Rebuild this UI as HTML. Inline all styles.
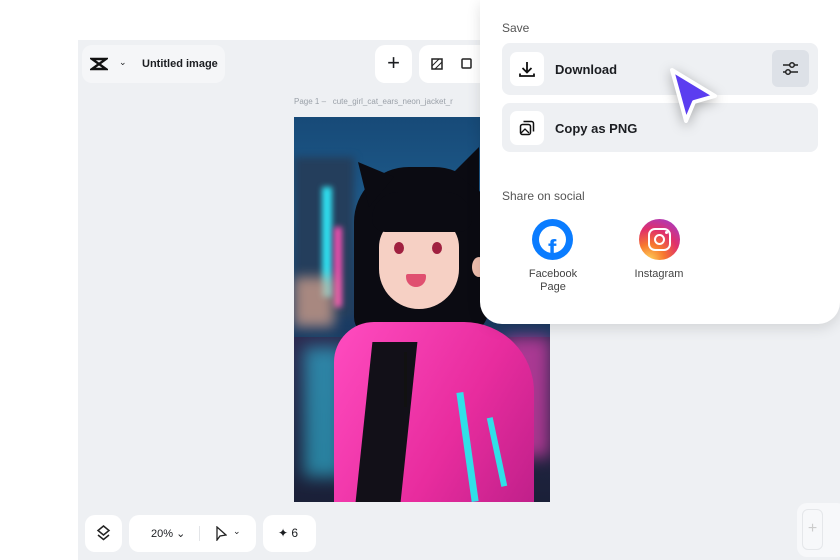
<!DOCTYPE html>
<html><head><style>
*{margin:0;padding:0;box-sizing:border-box}
body{width:840px;height:560px;overflow:hidden;background:#fff;font-family:"Liberation Sans",sans-serif;position:relative;color:#1b1d21}
.canvas{position:absolute;left:78px;top:40px;width:762px;height:520px;background:#eef0f3}
.card{position:absolute;background:#fff;border-radius:10px}
.img{position:absolute;left:294px;top:117px;width:256px;height:385px;overflow:hidden;
background:linear-gradient(180deg,#174a78 0%,#1e5c8c 25%,#1a3d66 50%,#162640 100%)}
.img div{position:absolute}
.pop{position:absolute;left:480px;top:0;width:360px;height:324px;background:#fff;border-radius:0 0 22px 22px;box-shadow:0 4px 14px rgba(0,0,0,.12)}
.row{position:absolute;left:22px;width:316px;background:#eef0f3;border-radius:8px}
.ib{position:absolute;left:8px;top:8px;width:34px;height:34px;background:#fff;border-radius:7px}
.lbl{position:absolute;left:53px;font-size:13px;font-weight:bold;color:#1b1d21}
.sm{font-size:11px;color:#444;text-align:center;position:absolute;line-height:13px}
</style></head><body>
<div class="canvas"></div>
<div class="card" style="left:82px;top:45px;width:143px;height:38px;background:#f5f6f8">
 <svg style="position:absolute;left:8px;top:11px" width="18" height="16" viewBox="0 0 18 16"><path d="M2 3h14l-7 5 7 5H2l7-5z" fill="none" stroke="#111" stroke-width="2.4"/></svg>
 <span style="position:absolute;left:37px;top:12px;font-size:9px">⌄</span>
 <span style="position:absolute;left:60px;top:13px;font-size:11px;font-weight:bold">Untitled image</span>
</div>
<div class="card" style="left:375px;top:45px;width:37px;height:38px;font-size:22px;text-align:center;line-height:36px">+</div>
<div class="card" style="left:419px;top:45px;width:70px;height:38px">
 <svg style="position:absolute;left:12px;top:13px" width="12" height="12"><rect x="1" y="1" width="10" height="10" fill="none" stroke="#222" stroke-width="1.5"/><path d="M1 8L8 1M4 11L11 4" stroke="#222"/></svg>
 <svg style="position:absolute;left:41px;top:12px" width="13" height="13"><rect x="2" y="2" width="9" height="9" fill="none" stroke="#222" stroke-width="1.5" rx="1"/></svg>
</div>
<div style="position:absolute;left:294px;top:97px;font-size:8px;color:#9aa0a8;white-space:nowrap">Page 1 –&nbsp;&nbsp; cute_girl_cat_ears_neon_jacket_r</div>
<div class="img">
 <div style="left:0;top:40px;width:60px;height:160px;background:#243e5c;filter:blur(4px)"></div>
 <div style="left:28px;top:70px;width:10px;height:110px;background:#30e0f0;filter:blur(3px)"></div>
 <div style="left:40px;top:110px;width:8px;height:80px;background:#f050b0;filter:blur(3px)"></div>
 <div style="left:0;top:160px;width:40px;height:50px;background:#e0a890;filter:blur(6px);opacity:.7"></div>
 <div style="left:0;top:220px;width:256px;height:165px;background:linear-gradient(180deg,#2c2a50,#1a2038)"></div>
 <div style="left:10px;top:230px;width:40px;height:130px;background:#30c0e0;filter:blur(8px);opacity:.6"></div>
 <div style="left:210px;top:220px;width:46px;height:120px;background:#e040b0;filter:blur(8px);opacity:.7"></div>
 <div style="left:60px;top:50px;width:135px;height:170px;background:#0b0b12;border-radius:55px 55px 30px 20px"></div>
 <svg style="position:absolute;left:0;top:0" width="256" height="120"><path d="M64 45L100 60 75 90z M185 30L160 55 185 75z" fill="#0b0b12"/></svg>
 <div style="left:85px;top:100px;width:80px;height:92px;background:#f6d0c4;border-radius:30px 30px 40px 40px"></div>
 <div style="left:78px;top:75px;width:100px;height:40px;background:#0b0b12;border-radius:40px 40px 20px 20px"></div>
 <div style="left:100px;top:125px;width:10px;height:12px;background:#a02040;border-radius:50%"></div>
 <div style="left:138px;top:125px;width:10px;height:12px;background:#a02040;border-radius:50%"></div>
 <div style="left:112px;top:157px;width:20px;height:13px;background:#e05070;border-radius:2px 2px 10px 10px"></div>
 <div style="left:178px;top:140px;width:14px;height:20px;background:#f0c0b0;border-radius:50%"></div>
 <div style="left:40px;top:205px;width:200px;height:180px;background:linear-gradient(120deg,#ff4cc0,#e82c9e 60%,#c0208a);border-radius:40px 70px 0 0"></div>
 <div style="left:70px;top:225px;width:45px;height:160px;background:#121018;transform:skewX(-6deg)"></div>
 <div style="left:110px;top:235px;width:3px;height:55px;background:#111"></div>
 <div style="left:170px;top:275px;width:7px;height:110px;background:#30e0e8;transform:rotate(-8deg)"></div>
 <div style="left:200px;top:300px;width:6px;height:70px;background:#30e0e8;transform:rotate(-12deg)"></div>
</div>
<div class="pop">
 <div style="position:absolute;left:22px;top:21px;font-size:12px;color:#555">Save</div>
 <div class="row" style="top:43px;height:52px"><div class="ib" style="top:9px">
  <svg style="position:absolute;left:8px;top:8px" width="18" height="18" viewBox="0 0 18 18"><path d="M9 2v10M4.5 8L9 12.5 13.5 8M2 13.5v2.5h14v-2.5" fill="none" stroke="#111" stroke-width="1.8"/></svg></div>
  <div class="lbl" style="top:19px">Download</div>
  <div style="position:absolute;left:270px;top:7px;width:37px;height:37px;background:#dde1e7;border-radius:6px">
  <svg style="position:absolute;left:10px;top:10px" width="17" height="17" viewBox="0 0 17 17"><path d="M1 5h15M1 12h15" stroke="#222" stroke-width="1.5"/><circle cx="10" cy="5" r="2.3" fill="#dde1e7" stroke="#222" stroke-width="1.5"/><circle cx="6" cy="12" r="2.3" fill="#dde1e7" stroke="#222" stroke-width="1.5"/></svg></div>
 </div>
 <div class="row" style="top:103px;height:49px"><div class="ib" style="top:8px">
  <svg style="position:absolute;left:9px;top:9px" width="16" height="16" viewBox="0 0 16 16"><rect x="1.5" y="4.5" width="10" height="10" rx="2" fill="none" stroke="#111" stroke-width="1.5"/><path d="M4.5 1.5h8a2 2 0 0 1 2 2v8" fill="none" stroke="#111" stroke-width="1.5"/><path d="M2 13l4-4 4 4" fill="none" stroke="#111" stroke-width="1.3"/></svg></div>
  <div class="lbl" style="top:18px">Copy as PNG</div>
 </div>
 <svg style="position:absolute;left:184px;top:64px;filter:drop-shadow(0 3px 6px rgba(0,0,0,.3))" width="56" height="64" viewBox="0 0 56 64"><path d="M8 6L51 32 30 38 22 57z" fill="#5b3df0" stroke="#fff" stroke-width="4" stroke-linejoin="round"/></svg>
 <div style="position:absolute;left:22px;top:189px;font-size:12px;color:#555">Share on social</div>
 <div style="position:absolute;left:52px;top:219px;width:41px;height:41px;border-radius:50%;background:#0a7cff">
  <div style="position:absolute;left:7px;top:7px;width:27px;height:27px;border-radius:50%;background:#fff"></div>
  <div style="position:absolute;left:16px;top:20px;font:bold 25px 'Liberation Sans';color:#0a7cff;line-height:20px">f</div></div>
 <div class="sm" style="left:40px;top:268px;width:66px">Facebook<br>Page</div>
 <div style="position:absolute;left:159px;top:219px;width:41px;height:41px;border-radius:50%;background:radial-gradient(circle at 25% 100%,#fdd05a 0%,#f7792e 30%,#e0306a 60%,#a83bc2 90%)">
  <div style="position:absolute;left:9px;top:9px;width:23px;height:23px;border:2.5px solid #fff;border-radius:7px"></div>
  <div style="position:absolute;left:15px;top:15px;width:11px;height:11px;border:2.5px solid #fff;border-radius:50%"></div>
  <div style="position:absolute;left:26px;top:12px;width:3px;height:3px;background:#fff;border-radius:50%"></div></div>
 <div class="sm" style="left:146px;top:268px;width:66px">Instagram</div>
</div>
<div class="card" style="left:85px;top:515px;width:37px;height:37px">
 <svg style="position:absolute;left:11px;top:10px" width="15" height="17" viewBox="0 0 15 17"><path d="M7.5 1L13 5.5 7.5 10 2 5.5z" fill="none" stroke="#222" stroke-width="1.5"/><path d="M2 10l5.5 4.5L13 10" fill="none" stroke="#222" stroke-width="1.5"/></svg></div>
<div class="card" style="left:129px;top:515px;width:127px;height:37px">
 <span style="position:absolute;left:22px;top:12px;font-size:11px">20% ⌄</span>
 <div style="position:absolute;left:70px;top:11px;width:1px;height:15px;background:#e3e5e8"></div>
 <svg style="position:absolute;left:86px;top:11px" width="12" height="15"><path d="M2 1v13l3-4 6-1z" fill="none" stroke="#222" stroke-width="1.3"/></svg>
 <span style="position:absolute;left:104px;top:11px;font-size:9px">⌄</span></div>
<div class="card" style="left:263px;top:515px;width:53px;height:37px">
 <span style="position:absolute;left:15px;top:11px;font-size:12px">✦ 6</span></div>
<div class="card" style="left:797px;top:503px;width:50px;height:54px;background:#f7f8fa">
 <div style="position:absolute;left:5px;top:6px;width:21px;height:41px;border:1px solid #e5e7ea;border-radius:6px;color:#ccc;text-align:center;line-height:38px">+</div></div>
</body></html>
